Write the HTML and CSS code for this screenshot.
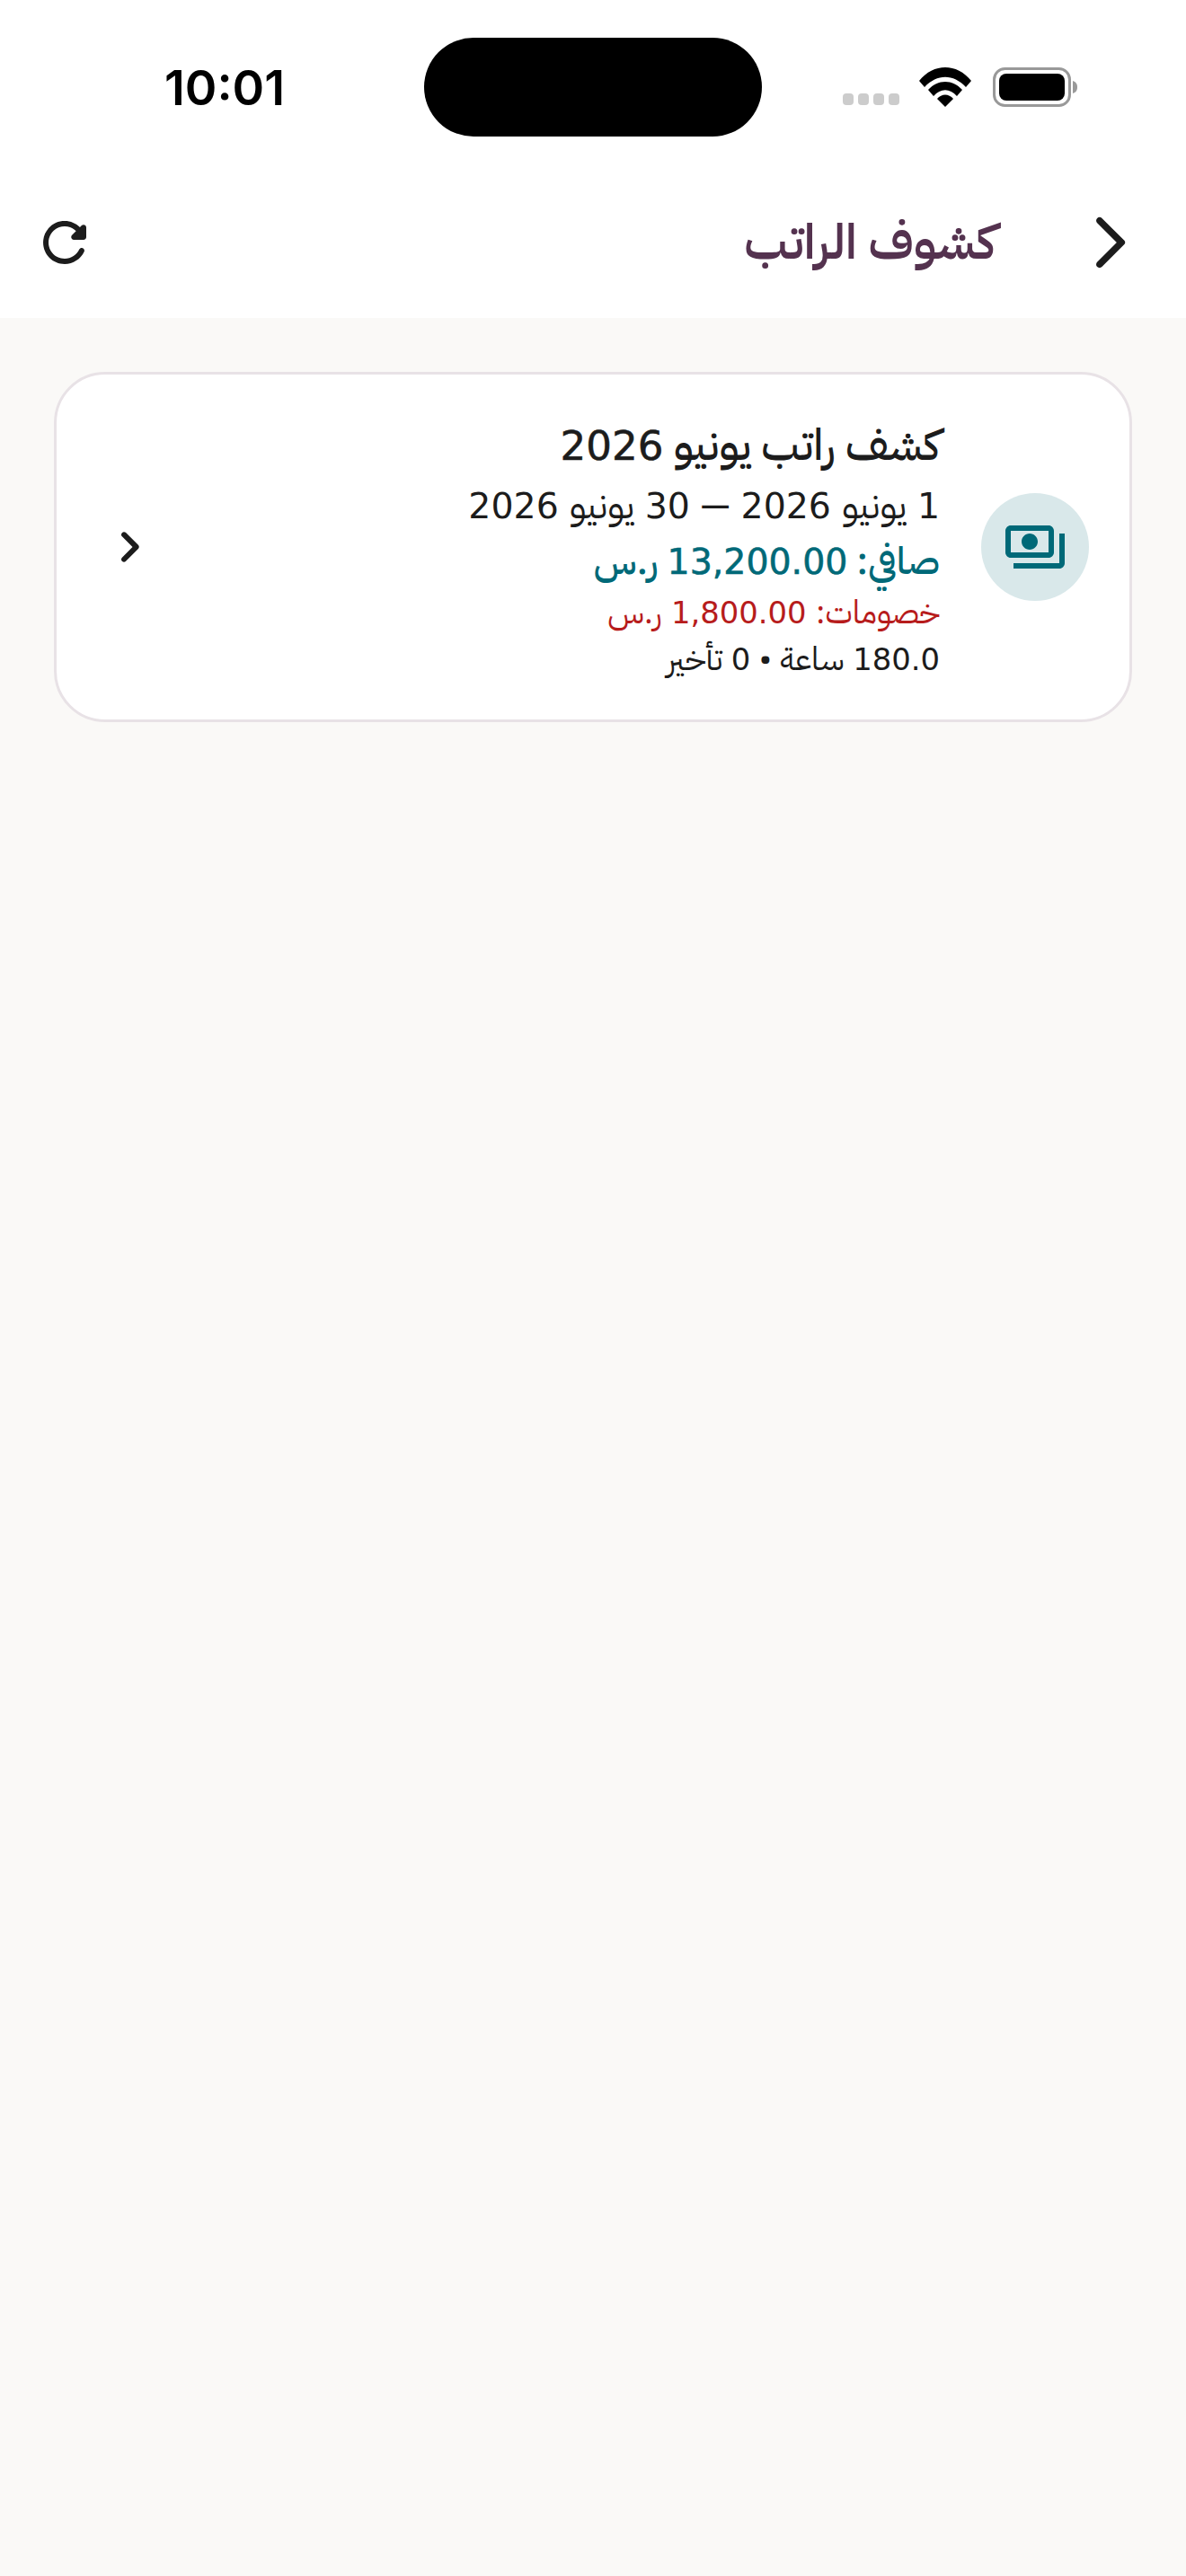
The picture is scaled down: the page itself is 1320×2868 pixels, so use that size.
FILE: index.html
```html
<!DOCTYPE html>
<html lang="ar" dir="rtl">
<head>
    <meta charset="UTF-8">
    <meta name="viewport" content="width=device-width, initial-scale=1.0">
    <title>كشوف الراتب</title>
    <link rel="stylesheet" href="styles.css">
</head>
<body>
    <header class="top">
        <div class="status-bar" dir="ltr">
            <div class="clock">10:01</div>
            <div class="island"></div>
            <div class="status-icons">
                <div class="signal"><span></span><span></span><span></span><span></span></div>
                <svg class="wifi" viewBox="0 0 58 44" width="58" height="44">
                    <path d="M0 15 C16 -5 42 -5 58 15 L52 22 C38 7 20 7 6 22 Z" fill="#000"/>
                    <path d="M10 25 C21 13 37 13 48 25 L42 32 C34 23 24 23 16 32 Z" fill="#000"/>
                    <path d="M20 35 C25 29 33 29 38 35 L29 44 Z" fill="#000"/>
                </svg>
                <svg class="battery" viewBox="0 0 94 44" width="94" height="44">
                    <rect x="1.5" y="1.5" width="84" height="41" rx="12" fill="none" stroke="#999" stroke-width="3"/>
                    <rect x="7" y="7" width="73" height="30" rx="8" fill="#000"/>
                    <path d="M89 15 C92 16 94 18 94 22 C94 26 92 28 89 29 Z" fill="#999"/>
                </svg>
            </div>
        </div>
        <nav class="app-bar">
            <svg class="back" viewBox="0 0 24 24" width="72" height="72">
                <path d="M7.38 21.01c.49.49 1.28.49 1.77 0l8.31-8.31c.39-.39.39-1.02 0-1.41L9.15 2.98c-.49-.49-1.28-.49-1.77 0s-.49 1.28 0 1.77L14.62 12l-7.25 7.25c-.48.48-.48 1.28.01 1.76z" fill="#1c1c1c"/>
            </svg>
            <h1 class="page-title">كشوف الراتب</h1>
            <svg class="refresh" viewBox="0 0 24 24" width="72" height="72">
                <path d="M17.65 6.35c-1.63-1.63-3.94-2.57-6.48-2.31-3.67.37-6.69 3.35-7.1 7.02C3.52 15.91 7.27 20 12 20c3.19 0 5.93-1.87 7.21-4.56.32-.67-.16-1.44-.9-1.44-.37 0-.72.2-.88.53-1.13 2.43-3.84 3.97-6.8 3.31-2.22-.49-4.01-2.3-4.48-4.52C5.31 9.44 8.26 6 12 6c1.66 0 3.14.69 4.22 1.78l-1.51 1.51c-.63.63-.19 1.71.7 1.71H19c.55 0 1-.45 1-1V6.41c0-.89-1.08-1.34-1.71-.71l-.64.65z" fill="#1c1c1c"/>
            </svg>
        </nav>
    </header>

    <main class="content">
        <article class="card">
            <div class="icon-circle">
                <svg viewBox="0 0 24 24" width="72" height="72">
                    <path d="M19 14V6c0-1.1-.9-2-2-2H3c-1.1 0-2 .9-2 2v8c0 1.1.9 2 2 2h14c1.1 0 2-.9 2-2zm-2 0H3V6h14v8zm-7-7c-1.66 0-3 1.34-3 3s1.34 3 3 3 3-1.34 3-3-1.34-3-3-3zm13 0v11c0 1.1-.9 2-2 2H4v-2h17V7h2z" fill="#006978"/>
                </svg>
            </div>
            <div class="card-text">
                <div class="slip-title">كشف راتب يونيو <span class="num">2026</span></div>
                <div class="slip-period"><span class="num">1</span> يونيو <span class="num">2026</span> — <span class="num">30</span> يونيو <span class="num">2026</span></div>
                <div class="slip-net">صافي: <span class="num">13,200.00</span> ر.س</div>
                <div class="slip-deductions">خصومات: <span class="num">1,800.00</span> ر.س</div>
                <div class="slip-hours"><span class="num">180.0</span> ساعة • <span class="num">0</span> تأخير</div>
            </div>
            <svg class="card-chevron" viewBox="0 0 24 24" width="72" height="72">
                <path d="M9.29 6.71c-.39.39-.39 1.02 0 1.41L13.17 12l-3.88 3.88c-.39.39-.39 1.02 0 1.41.39.39 1.02.39 1.41 0l4.59-4.59c.39-.39.39-1.02 0-1.41L10.7 6.7c-.38-.38-1.02-.38-1.41.01z" fill="#1c1c1c"/>
            </svg>
        </article>
    </main>
</body>
</html>
```

FILE: styles.css
```css
* {
    box-sizing: border-box;
}

html, body {
    height: 100%;
}

body {
    margin: 0;
    background-color: #faf9f7;
    color: #1c1c1c;
    font-family: "IBM Plex Sans Arabic", "Noto Sans", sans-serif;
}

.top {
    height: 354px;
    padding-top: 42px;
    background-color: #fff;
}

.status-bar {
    display: flex;
    align-items: center;
    height: 110px;
}

.clock {
    width: 472px;
    padding-left: 28px;
    color: #000;
    font-family: Inter, sans-serif;
    font-size: 54px;
    font-weight: 600;
    text-align: center;
}

.island {
    width: 376px;
    height: 110px;
    background: #000;
    border-radius: 55px;
}

.status-icons {
    display: flex;
    align-items: center;
    margin-left: 90px;
}

.signal {
    display: flex;
    gap: 5px;
    align-self: flex-end;
    margin: 0 22px 2px 0;
}

.signal span {
    width: 12px;
    height: 13px;
    background: #ccc;
    border-radius: 4px;
}

.battery {
    margin-left: 24px;
}

.app-bar {
    display: flex;
    align-items: center;
    height: 138px;
    margin-top: 49px;
    padding: 0 49px 0 36px;
}

.back,
.refresh,
.card-chevron {
    flex: none;
}

.page-title {
    flex: 1;
    margin: 0 91px 0 0;
    color: #54324f;
    font-size: 54px;
    font-weight: 600;
    line-height: 1.2;
}

.content {
    padding: 60px;
}

.card {
    display: flex;
    align-items: center;
    height: 390px;
    padding: 0 45px;
    background: #fff;
    border: 3px solid #e8e2e6;
    border-radius: 57px;
}

.icon-circle {
    display: flex;
    flex: none;
    align-items: center;
    justify-content: center;
    width: 120px;
    height: 120px;
    border-radius: 50%;
    background: #d9e8ea;
}

.card-text {
    flex: 1;
    margin-right: 46px;
    padding-top: 2px;
}

/* the arabic face has stubby digits, these are closer */
.num {
    font-family: "DejaVu Sans", sans-serif;
    font-size: 0.94em;
}

/* dejavu has no medium weight */
.slip-title .num,
.slip-net .num {
    -webkit-text-stroke: 0.6px currentColor;
}

.slip-title {
    font-size: 48px;
    font-weight: 500;
    line-height: 70px;
}

.slip-period {
    font-size: 42px;
    line-height: 62px;
    word-spacing: 2px;
}

.slip-net {
    color: #006978;
    font-size: 42px;
    font-weight: 500;
    line-height: 62px;
}

.slip-deductions {
    color: #b71c1c;
    font-size: 36px;
    line-height: 52px;
    word-spacing: 2px;
}

.slip-hours {
    font-size: 36px;
    line-height: 50px;
    word-spacing: 1px;
}
```
